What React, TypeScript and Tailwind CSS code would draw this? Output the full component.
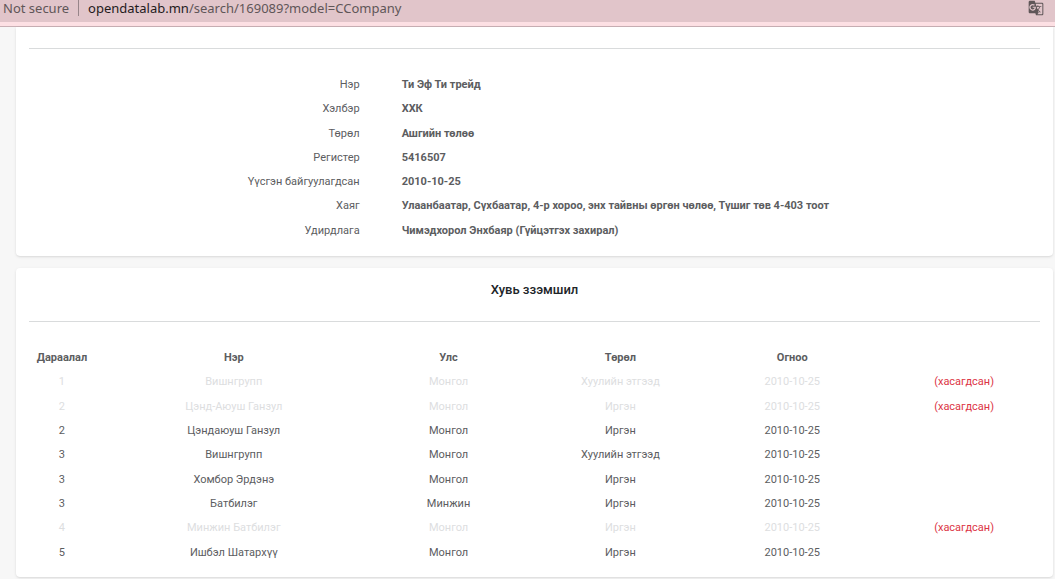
import clsx from 'clsx';
import { MdGTranslate } from 'react-icons/md';

type Detail = {
  label: string;
  value: string;
};

type Owner = {
  order: number;
  name: string;
  country: string;
  type: string;
  date: string;
  removed?: boolean;
};

const details: Detail[] = [
  { label: 'Нэр', value: 'Ти Эф Ти трейд' },
  { label: 'Хэлбэр', value: 'ХХК' },
  { label: 'Төрөл', value: 'Ашгийн төлөө' },
  { label: 'Регистер', value: '5416507' },
  { label: 'Үүсгэн байгуулагдсан', value: '2010-10-25' },
  { label: 'Хаяг', value: 'Улаанбаатар, Сүхбаатар, 4-р хороо, энх тайвны өргөн чөлөө, Түшиг төв 4-403 тоот' },
  { label: 'Удирдлага', value: 'Чимэдхорол Энхбаяр (Гүйцэтгэх захирал)' },
];

const owners: Owner[] = [
  { order: 1, name: 'Вишнгрупп', country: 'Монгол', type: 'Хуулийн этгээд', date: '2010-10-25', removed: true },
  { order: 2, name: 'Цэнд-Аюуш Ганзул', country: 'Монгол', type: 'Иргэн', date: '2010-10-25', removed: true },
  { order: 2, name: 'Цэндаюуш Ганзул', country: 'Монгол', type: 'Иргэн', date: '2010-10-25' },
  { order: 3, name: 'Вишнгрупп', country: 'Монгол', type: 'Хуулийн этгээд', date: '2010-10-25' },
  { order: 3, name: 'Хомбор Эрдэнэ', country: 'Монгол', type: 'Иргэн', date: '2010-10-25' },
  { order: 3, name: 'Батбилэг', country: 'Минжин', type: 'Иргэн', date: '2010-10-25' },
  { order: 4, name: 'Минжин Батбилэг', country: 'Монгол', type: 'Иргэн', date: '2010-10-25', removed: true },
  { order: 5, name: 'Ишбэл Шатархүү', country: 'Монгол', type: 'Иргэн', date: '2010-10-25' },
];

const AddressBar = () => (
  <header className="border-b border-[#c9b0b5] bg-[#fde0e4] pb-1 font-['Noto_Sans','Open_Sans',sans-serif] text-[13px]">
    <div className="flex h-[22px] items-center bg-[#e1c5ca] pr-[11px] pl-[3px] pb-[6px] leading-4 text-[#5f5658]">
      <span>Not secure</span>
      <span className="mx-[9px] h-4 w-px bg-[#978589]" />
      <span>
        <span className="text-[#1f1b1c]">opendatalab.mn</span>/search/169089?model=CCompany
      </span>
      <button type="button" aria-label="Translate this page" className="ml-auto">
        <MdGTranslate className="size-4" />
      </button>
    </div>
  </header>
);

const CompanyCard = () => (
  <section className="rounded-b bg-white pt-[21px] pb-[13px] shadow">
    <hr className="mx-[13px] border-[#d9dbdc]" />
    <dl className="mt-6 grid min-h-[170px] auto-rows-fr px-[3px]">
      {details.map((item) => (
        <div key={item.label} className="flex leading-6">
          <dt className="w-1/3 pr-[3px] text-right">{item.label}</dt>
          <dd className="flex-1 pl-[39px] font-bold">{item.value}</dd>
        </div>
      ))}
    </dl>
  </section>
);

const OwnersCard = () => (
  <section className="rounded bg-white pt-3 pb-3 shadow">
    <h2 className="text-center text-[13px] leading-5 font-medium text-[#212529]">Хувь ззэмшил</h2>
    <hr className="mx-[13px] mt-[21px] border-[#d9dbdc]" />
    <div className="mt-6 px-[3px]">
      <table className="h-[219px] w-full table-fixed text-center leading-6">
        <colgroup>
          <col className="w-1/12" />
          <col className="w-3/12" />
          <col className="w-2/12" />
          <col className="w-2/12" />
          <col className="w-2/12" />
          <col className="w-2/12" />
        </colgroup>
        <thead>
          <tr>
            <th>Дараалал</th>
            <th>Нэр</th>
            <th>Улс</th>
            <th>Төрөл</th>
            <th>Огноо</th>
            <td></td>
          </tr>
        </thead>
        <tbody>
          {owners.map((owner, index) => (
            <tr key={index} className={clsx(owner.removed && 'text-[#dddedf]')}>
              <td>{owner.order}</td>
              <td>{owner.name}</td>
              <td>{owner.country}</td>
              <td>{owner.type}</td>
              <td>{owner.date}</td>
              <td className="text-[#dc3545]">{owner.removed && '(хасагдсан)'}</td>
            </tr>
          ))}
        </tbody>
      </table>
    </div>
  </section>
);

const App = () => {
  return (
    <div className="min-h-screen bg-[#f7f7f7] font-['Roboto',sans-serif] text-[11px] text-[#5c5d5f]">
      <AddressBar />
      <main className="flex flex-col gap-3 pr-[2px] pb-[2px] pl-4">
        <CompanyCard />
        <OwnersCard />
      </main>
    </div>
  );
};

export default App;
